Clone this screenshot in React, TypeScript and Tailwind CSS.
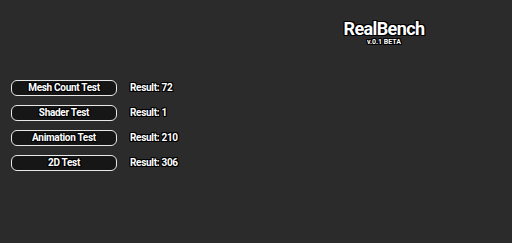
const tests = [
	{ name: "Mesh Count Test", result: 72 },
	{ name: "Shader Test", result: 1 },
	{ name: "Animation Test", result: 210 },
	{ name: "2D Test", result: 306 },
];

const outline = "[text-shadow:1px_1px_0_#000,-1px_-1px_0_#000,1px_-1px_0_#000,-1px_1px_0_#000,0_1px_0_#000,0_-1px_0_#000,1px_0_0_#000,-1px_0_0_#000]";

export default function App() {
	return (
		<div className="w-[512px] h-[243px] bg-[#2b2b2b] font-['Roboto',sans-serif] text-white overflow-hidden flex">
			<div className="w-[256px] flex flex-col gap-[9px] pl-[11px] pt-[80px]">
				{tests.map((test) => (
					<div key={test.name} className="flex items-center gap-[13px]">
						<button
							className={`w-[106px] h-[16px] rounded-[6px] border-[1.5px] border-[#e8e8e8] bg-[#161616] text-[10px] tracking-[-0.3px] font-bold leading-none flex items-center justify-center ${outline}`}
						>
							{test.name}
						</button>
						<span className={`text-[10px] tracking-[-0.3px] font-bold leading-none ${outline}`}>
							Result: {test.result}
						</span>
					</div>
				))}
			</div>
			<div className="w-[256px] flex flex-col items-center pt-[20px]">
				<div className={`text-[18px] tracking-[-0.6px] font-bold leading-[17px] ${outline}`}>
					RealBench
				</div>
				<div className={`text-[7px] font-bold leading-[7px] mt-[2px] ${outline}`}>v.0.1 BETA</div>
			</div>
		</div>
	);
}
